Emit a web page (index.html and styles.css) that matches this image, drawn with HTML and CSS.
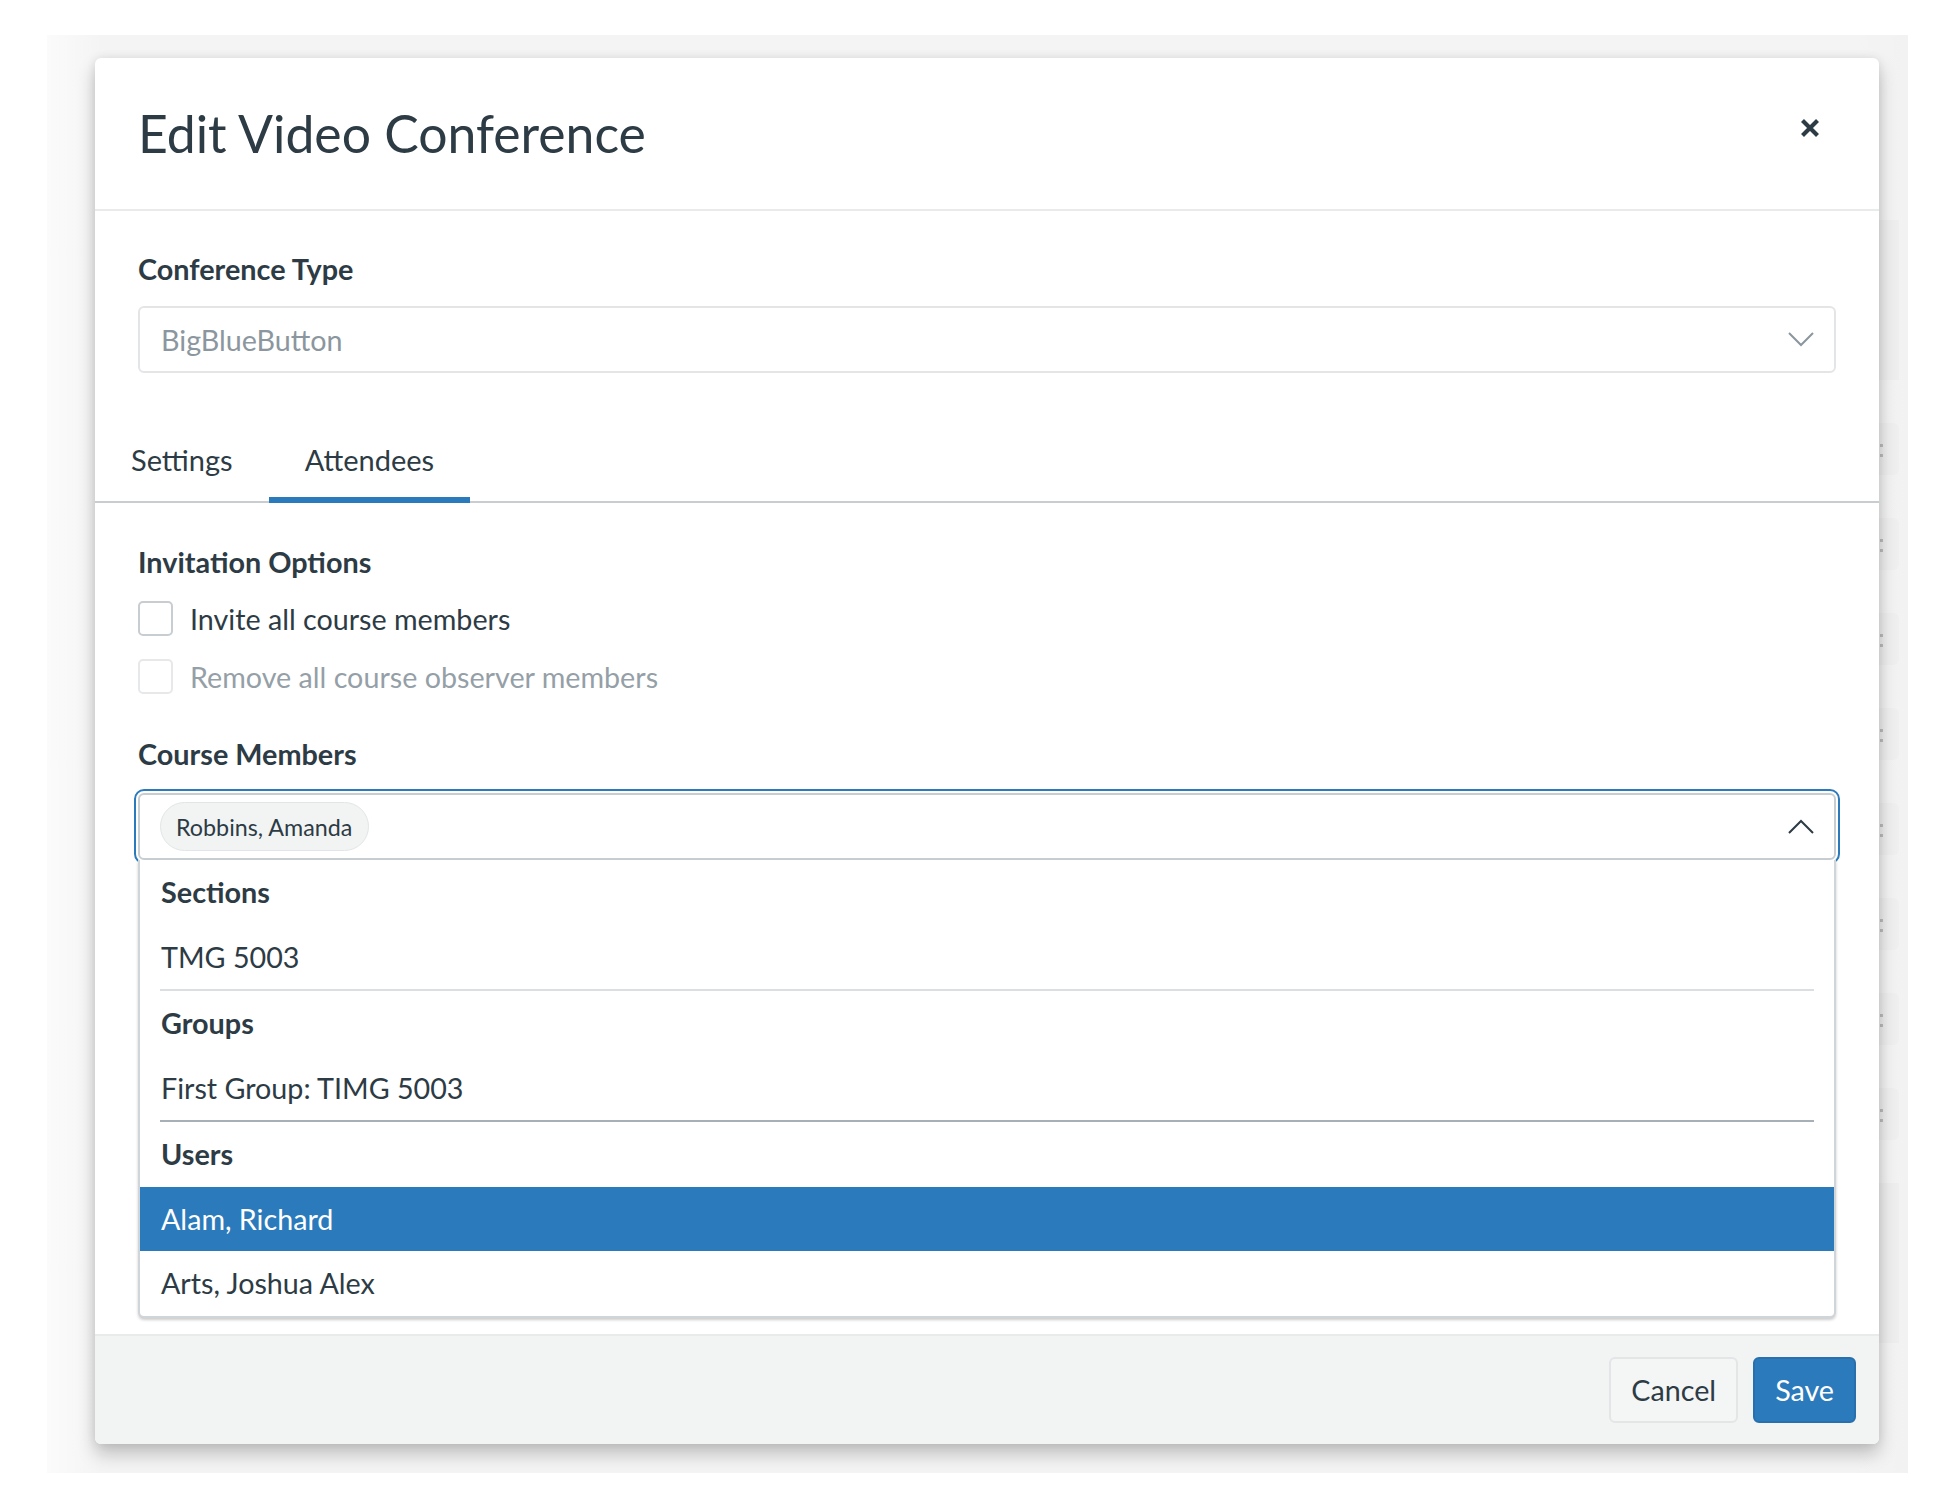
FILE: index.html
```html
<!DOCTYPE html>
<html lang="en">
  <head>
    <meta charset="utf-8">
    <title>Edit Video Conference</title>
    <link rel="stylesheet" href="styles.css">
  </head>
  <body>

    <div class="stage">

      <!-- Modal -->
      <div class="modal">
        <div class="modal__header">
          <h1 class="modal__title">Edit Video Conference</h1>
          <button class="modal__close" aria-label="Close">
            <svg width="20" height="20" viewBox="0 0 20 20"><path d="M2.5 2.5 L17.5 17.5 M17.5 2.5 L2.5 17.5" stroke="#2d3b45" stroke-width="4.2" fill="none"/></svg>
          </button>
        </div>

        <div class="modal__body">
          <div class="field-label">Conference Type</div>
          <div class="select select--disabled">
            <span>BigBlueButton</span>
            <svg width="26" height="15" viewBox="0 0 26 15"><path d="M1 1 L13 13 L25 1" stroke="#8b969e" stroke-width="2" fill="none"/></svg>
          </div>

          <div class="tabs">
            <div class="tabs__tab">Settings</div>
            <div class="tabs__tab tabs__tab--active">Attendees</div>
          </div>

          <div class="field-label field-label--section">Invitation Options</div>
          <label class="check">
            <span class="check__box"></span>
            <span>Invite all course members</span>
          </label>
          <label class="check check--disabled">
            <span class="check__box"></span>
            <span>Remove all course observer members</span>
          </label>

          <div class="field-label field-label--members">Course Members</div>
          <div class="combo">
            <div class="combo__input">
              <span class="chip">Robbins, Amanda</span>
              <svg width="26" height="15" viewBox="0 0 26 15"><path d="M1 14 L13 2 L25 14" stroke="#2d3b45" stroke-width="2" fill="none"/></svg>
            </div>
            <ul class="combo__menu">
              <li class="combo__group">Sections</li>
              <li class="combo__option">TMG 5003</li>
              <li class="combo__sep"></li>
              <li class="combo__group">Groups</li>
              <li class="combo__option">First Group: TIMG 5003</li>
              <li class="combo__sep combo__sep--dark"></li>
              <li class="combo__group">Users</li>
              <li class="combo__option combo__option--hl">Alam, Richard</li>
              <li class="combo__option">Arts, Joshua Alex</li>
            </ul>
          </div>
        </div>

        <div class="modal__footer">
          <button class="btn">Cancel</button>
          <button class="btn btn--primary">Save</button>
        </div>
      </div>

      <!-- page behind the overlay -->
      <div class="behind">
        <div class="behind__bar"></div>
        <div class="behind__card"></div>
        <div class="behind__card"></div>
        <div class="behind__card"></div>
        <div class="behind__card"></div>
        <div class="behind__card"></div>
        <div class="behind__card"></div>
        <div class="behind__card"></div>
        <div class="behind__card"></div>
        <div class="behind__bar"></div>
      </div>

    </div>

  </body>
</html>
```

FILE: styles.css
```css
body {
  margin: 0;
  background: #fff;
  font-family: Lato, "Liberation Sans", sans-serif;
  color: #2d3b45;
}

.stage {
  display: flex;
  width: 1861px;
  height: 1438px;
  margin: 35px 0 0 47px;
  padding: 23px 0 29px 48px;
  box-sizing: border-box;
  background: linear-gradient(90deg, #fbfbfb, #f4f4f4 3%, #f4f4f4 97%, #f2f2f2);
}

/* modal */
.modal {
  width: 1784px;
  height: 1386px;
  flex: none;
  display: flex;
  flex-direction: column;
  background: #fff;
  border-radius: 6px;
  box-shadow: 0 10px 18px rgba(0, 0, 0, .22), 0 0 10px rgba(0, 0, 0, .08);
  position: relative;
  z-index: 1;
}

.modal__header {
  height: 151px;
  border-bottom: 2px solid #e8eaec;
  display: flex;
  align-items: center;
  justify-content: space-between;
  padding: 0 59px 0 43px;
}

.modal__title {
  margin: 0;
  font-size: 51.7px;
  font-weight: 400;
  line-height: 1;
  padding-top: 1px;
}

.modal__close {
  border: 0;
  background: none;
  padding: 0;
  width: 20px; height: 20px;
  margin-bottom: 12px;
}
.modal__close svg { display: block; }

.modal__body {
  flex: 1;
  padding: 0 43px;
}

.field-label {
  font-size: 28.8px;
  font-weight: 700;
  line-height: 36px;
  margin-top: 40px;
}
.field-label--section { margin-top: 41px; }
.field-label--members { margin-top: 42px; }

.select {
  margin-top: 19px;
  height: 67px;
  box-sizing: border-box;
  border: 2px solid #e3e5e7;
  border-radius: 6px;
  display: flex;
  align-items: center;
  justify-content: space-between;
  padding: 0 20px 0 21px;
  font-size: 28.7px;
}
.select--disabled { color: #8b969e; }
.select svg { display: block; }

/* tabs */
.tabs {
  display: flex;
  margin: 67px -43px 0;
  border-bottom: 2px solid #c7cdd1;
}

.tabs__tab {
  padding: 2px 36px 19px;
  font-size: 29px;
  line-height: 36px;
  border-bottom: 6px solid transparent;
  margin-bottom: -2px;
}
.tabs__tab--active {
  padding: 2px 36px 19px;
  border-bottom-color: #2b7abc;
}

/* checkboxes */
.check {
  display: flex;
  align-items: center;
  gap: 17px;
  height: 35px;
  margin-top: 21px;
  font-size: 28.7px;
}
.check + .check { margin-top: 23px; }

.check__box {
  width: 35px; height: 35px;
  box-sizing: border-box;
  border: 2px solid #c7cdd1;
  border-radius: 5px;
  background: #fff;
}

.check--disabled { color: #959fa7; }
.check--disabled .check__box { border-color: #e6e8ea; }

/* combobox */
.combo {
  margin-top: 21px;
  position: relative;
}

.combo__input {
  height: 67px;
  box-sizing: border-box;
  border: 2px solid #c7cdd1;
  border-radius: 6px;
  outline: 2px solid #2b7abc;
  outline-offset: 2px;
  display: flex;
  align-items: center;
  justify-content: space-between;
  padding: 0 20px 0 20px;
}
.combo__input svg { display: block; }

.chip {
  height: 49px;
  box-sizing: border-box;
  display: flex;
  align-items: center;
  padding: 0 16px 0 15px;
  background: #f2f4f4;
  border: 1px solid #e2e5e7;
  border-radius: 25px;
  font-size: 23.3px;
}

.combo__menu {
  list-style: none;
  margin: 0;
  padding: 0;
  position: relative;
  background: #fff;
  border: 2px solid #d0d5d9;
  border-top: 0;
  border-radius: 0 0 6px 6px;
  box-shadow: 0 2px 3px rgba(0, 0, 0, .2);
}

.combo__group,
.combo__option {
  height: 64.5px;
  display: flex;
  align-items: center;
  padding: 0 21px;
  font-size: 28.7px;
}
.combo__group { font-weight: 700; font-size: 28.8px; }

.combo__option--hl {
  background: #2b7abc;
  color: #fff;
}

.combo__sep {
  height: 2px;
  margin: 0 20px;
  background: #dcdfe2;
}
.combo__sep--dark { background: #a8b0b7; }

/* footer */
.modal__footer {
  height: 108px;
  border-top: 2px solid #e8eaec;
  background: #f2f4f4;
  border-radius: 0 0 6px 6px;
  display: flex;
  align-items: center;
  justify-content: flex-end;
  gap: 15px;
  padding: 0 23px;
}

.btn {
  height: 66px;
  padding: 0 20px;
  font-family: inherit;
  font-size: 28.7px;
  color: #2d3b45;
  background: #f4f5f5;
  border: 2px solid #e3e5e7;
  border-radius: 6px;
}

.btn--primary {
  background: #2b7abc;
  border-color: #2770ad;
  color: #fff;
}

/* faint page behind the overlay */
.behind {
  flex: none;
  width: 20px;
  display: flex;
  flex-direction: column;
  gap: 43px;
  padding-top: 162px;
}

.behind__bar {
  height: 160px;
  background: #eeeeee;
}

.behind__card {
  height: 52px;
  border-radius: 0 6px 6px 0;
  background: #efefef;
  position: relative;
}
.behind__card::before {
  content: "";
  position: absolute;
  left: 1px; top: 21px;
  width: 3px; height: 3px;
  background: #bdbdbd;
  box-shadow: 0 10px 0 #bdbdbd;
}
```
